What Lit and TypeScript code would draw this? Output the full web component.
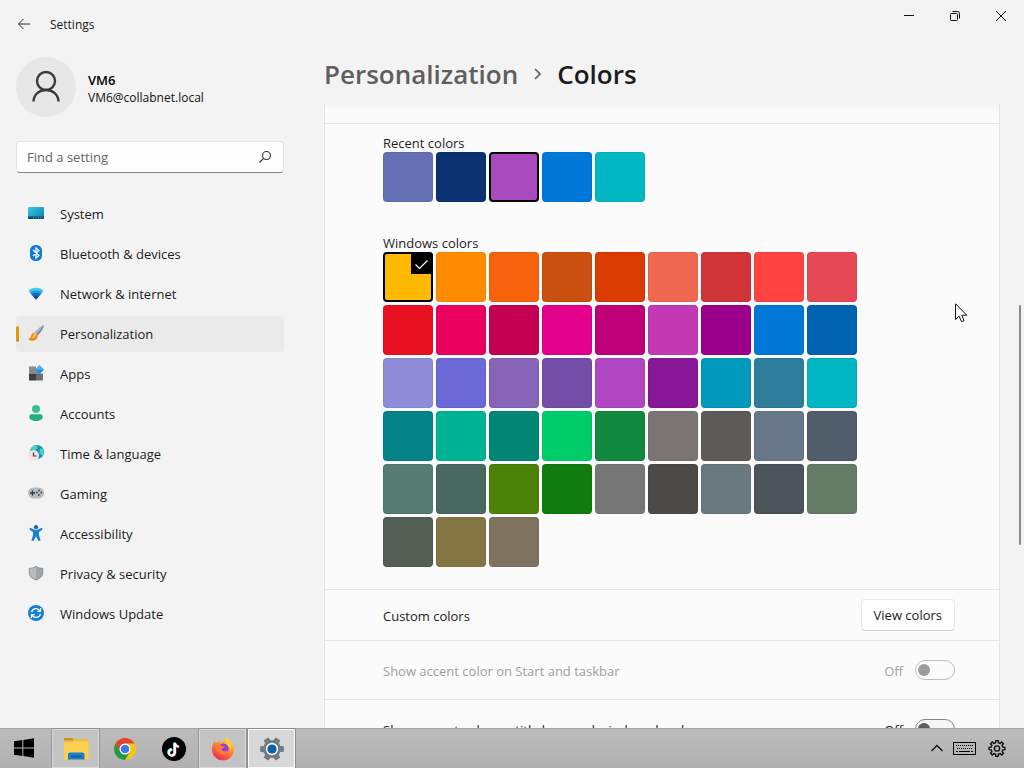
import { LitElement, html, svg, css, nothing } from "lit";
import { customElement, property } from "lit/decorators.js";
import { classMap } from "lit/directives/class-map.js";
import { styleMap } from "lit/directives/style-map.js";

const recentColors = ["#6570b4", "#0b3170", "#a84abe", "#0078d7", "#00b7c3"];

const windowsColors = [
  "#ffb900", "#ff8c00", "#f7630c", "#ca5010", "#da3b01", "#ef6950", "#d13438", "#ff4343", "#e74856",
  "#e81123", "#ea005e", "#c30052", "#e3008c", "#bf0077", "#c239b3", "#9a0089", "#0078d7", "#0063b1",
  "#8e8cd8", "#6b69d6", "#8764b8", "#744da9", "#b146c2", "#881798", "#0099bc", "#2d7d9a", "#00b7c3",
  "#038387", "#00b294", "#018574", "#00cc6a", "#10893e", "#7a7574", "#5d5a58", "#68768a", "#515c6b",
  "#567c73", "#486860", "#498205", "#107c10", "#767676", "#4c4a48", "#69797e", "#4a5459", "#647c64",
  "#525e54", "#847545", "#7e735f",
];

const navIcons = {
  system: svg`
    <defs><linearGradient id="g" x1="0" y1="0" x2="1" y2="1"><stop offset="0" stop-color="#35cbe4"/><stop offset="1" stop-color="#0a7fae"/></linearGradient></defs>
    <rect x="0" y="2" width="16" height="12" rx="1" fill="url(#g)"/>
    <path d="M0 11.5h16V13a1 1 0 0 1-1 1H1a1 1 0 0 1-1-1z" fill="#0b4a63"/>
    <path d="M5 12.8h1M7.5 12.8h1M10 12.8h1M12.5 12.8h1.5" stroke="#4fb9dc" stroke-width="1"/>`,
  bluetooth: svg`
    <rect x="2" y="0" width="12" height="16" rx="5.500" fill="#0f78e0"/>
    <path d="M5 5l6 5.600L8 13.200V2.800l3 2.600L5 11" fill="none" stroke="#fff" stroke-width="1.300"/>`,
  network: svg`
    <path d="M0.300 5.800C3.500 1.700 12.500 1.700 15.700 5.800L8 14.500z" fill="#45c8ef"/>
    <path d="M1.800 7.500C5 4.800 11 4.800 14.200 7.500L8 14.500z" fill="#1d9add"/>
    <path d="M3.500 9.400C6 7.600 10 7.600 12.500 9.400L8 14.500z" fill="#0d6abb"/>
    <path d="M5.500 11.700Q8 10 10.500 11.700L8 14.500z" fill="#0a4c92"/>`,
  personalization: svg`
    <path d="M15.800 .2c-2 .2-7.200 4.600-9.400 7.600l3.200 2.800C12.400 8 16 3 15.800.2z" fill="#7d8b99"/>
    <path d="M15.800.2C13.400 1.200 8.600 5.800 6.600 8.200l1.500 1.200z" fill="#b5c0c9"/>
    <path d="M6.800 7.700c-2.400-.2-3.500 1.500-3.700 3.100C2.900 12.500 1.900 13.500.3 13.700c1 1.700 3.300 2.400 5.400 1.800 2.300-.6 4.100-2.500 4.100-5.100z" fill="#e98b1e"/>
    <path d="M6.800 7.700c-1.800 1-1.400 3.900-3.200 5.500 2.100.2 4.200-.8 4.700-4z" fill="#fbbf52"/>`,
  apps: svg`
    <rect x="1" y="1.500" width="7" height="7" fill="#8b8b8b"/><rect x="1" y="8.500" width="7" height="7" fill="#3f3f3f"/>
    <rect x="8" y="8.500" width="7" height="7" fill="#6d6d6d"/><rect x="8" y="4" width="4" height="5" fill="#8b8b8b"/>
    <path d="M11.500 .2l4.500 4.500-4.500 4.500L7 4.700z" fill="#1f8fe0"/><path d="M11.500.2L16 4.700h-9z" fill="#51b0f0"/>`,
  accounts: svg`
    <circle cx="8" cy="4" r="4" fill="#35c191"/>
    <path d="M3.500 9.300h9A2.200 2.200 0 0 1 14.700 11.500c0 2.800-2.800 4.500-6.700 4.500s-6.700-1.700-6.700-4.500A2.200 2.200 0 0 1 3.500 9.300z" fill="#22b07d"/>`,
  time: svg`
    <circle cx="9" cy="7" r="7" fill="#1596ad"/>
    <path d="M8 .1A7 7 0 0 0 2.500 4.500l4 1L10 3zM12 3l3.600 2c.6 2 .3 4-1 6L11.500 8z" fill="#4cd0cf"/>
    <circle cx="5.500" cy="10.500" r="5.500" fill="#f3e3e5"/>
    <path d="M5.500 7.500v3.500h3" fill="none" stroke="#3b3b4f" stroke-width="1.200"/>`,
  gaming: svg`
    <rect x="0" y="2.500" width="16" height="11" rx="5.500" fill="#b3bbc3"/>
    <path d="M2 8h5M4.500 5.500v5" stroke="#30363d" stroke-width="1.300"/>
    <circle cx="11" cy="5.500" r=".9" fill="#424a52"/><circle cx="13.300" cy="7.500" r=".9" fill="#424a52"/>
    <circle cx="8.800" cy="7.500" r=".9" fill="#424a52"/><circle cx="10.800" cy="10" r=".9" fill="#424a52"/>`,
  accessibility: svg`
    <circle cx="8" cy="2.200" r="2.100" fill="#1464b8"/>
    <path d="M2.300 2.700l4.200 2.100h3l4.200-2.100 .9 1.800-3.600 2.400v3.200l1.500 5.400-2 .5L8 11.500 5.500 16l-2-.5L5 10.100V6.900L1.400 4.500z" fill="#1b7fd8"/>`,
  privacy: svg`
    <path d="M8 1c2 1.300 4.300 1.900 7.200 1.900v4.600c0 3.800-2.700 6.500-7.200 7.900C3.500 14 .8 11.300.8 7.500V2.900C3.700 2.900 6 2.300 8 1z" fill="#8f9295"/>
    <path d="M8 2.100c1.800 1.100 3.900 1.600 6.300 1.700v3.700c0 3.200-2.200 5.600-6.300 6.900z" fill="#a1a4a7"/>
    <path d="M8 2.100C6.200 3.200 4.100 3.700 1.700 3.800v3.700c0 3.200 2.200 5.600 6.300 6.900z" fill="#b9bcbe"/>`,
  update: svg`
    <circle cx="8" cy="8" r="8" fill="#1180d6"/>
    <path d="M3.600 7.200A4.600 4.600 0 0 1 12 5.800M12.400 8.800A4.600 4.600 0 0 1 4 10.200" fill="none" stroke="#fff" stroke-width="1.400"/>
    <path d="M12.600 3v3.300H9.300M3.400 13V9.700h3.300" fill="none" stroke="#fff" stroke-width="1.200"/>`,
};

const navItems: { label: string; icon: keyof typeof navIcons; current?: boolean }[] = [
  { label: "System", icon: "system" },
  { label: "Bluetooth & devices", icon: "bluetooth" },
  { label: "Network & internet", icon: "network" },
  { label: "Personalization", icon: "personalization", current: true },
  { label: "Apps", icon: "apps" },
  { label: "Accounts", icon: "accounts" },
  { label: "Time & language", icon: "time" },
  { label: "Gaming", icon: "gaming" },
  { label: "Accessibility", icon: "accessibility" },
  { label: "Privacy & security", icon: "privacy" },
  { label: "Windows Update", icon: "update" },
];

@customElement("settings-nav")
class SettingsNav extends LitElement {
  static styles = css`
    :host { display: block; padding: 9px 16px 0; }
    .account { display: flex; align-items: center; gap: 12px; }
    .avatar { width: 60px; height: 60px; border-radius: 50%; background: #e7e7e7; }
    .who { padding-top: 3px; }
    .name { font-size: 13px; line-height: 18px; font-weight: 600; color: #000; }
    .mail { font-size: 12px; line-height: 18px; color: #111; }
    .search {
      display: flex; align-items: center; box-sizing: border-box; height: 32px; margin: 24px 0 23px;
      padding: 0 11px 0 10px; background: #fdfdfd; border: 1px solid #e4e4e4; border-bottom-color: #868686; border-radius: 4px;
    }
    .search input {
      flex: 1; min-width: 0; border: 0; padding: 0; outline: 0; background: none;
      font: inherit; font-size: 13px; color: #1b1b1b;
    }
    .search input::placeholder { color: #666; opacity: 1; }
    ul { list-style: none; margin: 0; padding: 0; display: grid; gap: 4px; }
    .item {
      display: flex; align-items: center; height: 36px; gap: 16px; border-radius: 4px;
      color: #1b1b1b; text-decoration: none; font-size: 13px;
    }
    .marker { width: 3px; height: 16px; border-radius: 2px; margin-right: -7px; }
    .current { background: #eaeaea; }
    .current .marker { background: #dc9a0a; }
    .icon { overflow: visible; margin-bottom: 2px; }
  `;
  render() {
    return html`
      <div class="account">
        <svg class="avatar" viewBox="0 0 60 60" fill="none" stroke="#3b3b3b" stroke-width="2.400">
          <circle cx="30" cy="24" r="9"/><path d="M17.500 44.500c.3-7 5.500-11.500 12.500-11.500s12.200 4.500 12.500 11.500"/>
        </svg>
        <div class="who"><div class="name">VM6</div><div class="mail">VM6@collabnet.local</div></div>
      </div>
      <label class="search">
        <input type="text" placeholder="Find a setting" aria-label="Find a setting"/>
        <svg width="14" height="14" viewBox="0 0 14 14" fill="none" stroke="#333" stroke-width="1.100">
          <circle cx="8.500" cy="5.500" r="4"/><path d="M5.600 8.400L1.500 12.500"/>
        </svg>
      </label>
      <nav><ul>
        ${navItems.map((i) => html`<li>
          <a href="#${i.icon}" class=${classMap({ item: true, current: !!i.current })} aria-current=${i.current ? "page" : nothing}>
            <span class="marker"></span>
            <svg class="icon" width="16" height="16" viewBox="0 0 16 16">${navIcons[i.icon]}</svg>
            <span>${i.label}</span>
          </a></li>`)}
      </ul></nav>`;
  }
}

@customElement("color-grid")
class ColorGrid extends LitElement {
  @property() heading = "";
  @property({ attribute: false }) colors: string[] = [];
  @property({ type: Number }) selected = -1;
  @property({ type: Boolean }) ticked = false;
  static styles = css`
    :host { display: block; }
    fieldset { border: 0; margin: 0; padding: 0; min-width: 0; }
    legend { padding: 0; font-size: 13px; line-height: 18px; color: #1b1b1b; }
    .grid { display: grid; grid-template-columns: repeat(9, 50px); gap: 3px; }
    .cell { position: relative; height: 50px; }
    input {
      appearance: none; display: block; width: 50px; height: 50px; margin: 0;
      border-radius: 4px; box-sizing: border-box; border: 1px solid rgba(0, 0, 0, 0.05);
    }
    input:checked { border: 2px solid #000; }
    .tick { position: absolute; top: 0; right: 0; border-top-right-radius: 4px; background: #000; }
  `;
  render() {
    return html`<fieldset>
      <legend>${this.heading}</legend>
      <div class="grid">
        ${this.colors.map((c, i) => html`<label class="cell">
          <input type="radio" name="color" aria-label=${c} .checked=${i === this.selected} style=${styleMap({ backgroundColor: c })}/>
          ${this.ticked && i === this.selected
            ? html`<svg class="tick" width="22" height="22" viewBox="0 0 22 22"><path d="M4.500 12.500l4 4 8-8" fill="none" stroke="#fff" stroke-width="1.200"/></svg>`
            : nothing}
        </label>`)}
      </div>
    </fieldset>`;
  }
}

@customElement("colors-page")
class ColorsPage extends LitElement {
  static styles = css`
    :host { display: flex; flex-direction: column; min-height: 0; min-width: 0; padding-left: 24px; }
    h1 {
      display: flex; align-items: center; gap: 14px; margin: 0; height: 56px; padding-bottom: 4px; box-sizing: border-box;
      font-size: 26px; line-height: 36px; font-weight: 600; color: #1b1b1b;
    }
    h1 a { color: #5e5e5e; text-decoration: none; }
    .view { flex: 1; min-height: 0; display: grid; grid-template-columns: 1fr 24px; grid-template-rows: minmax(0, 1fr); }
    .scroller { overflow: hidden; }
    .card { background: #fbfbfb; border: solid #e5e5e5; border-width: 0 1px; }
    .above { height: 19px; background: linear-gradient(#f3f3f3, #fbfbfb 6px); }
    .palette, .row { border-top: 1px solid #e5e5e5; padding: 0 44px 0 58px; }
    .palette { display: grid; gap: 32px; padding-top: 10px; padding-bottom: 22px; }
    .row { display: flex; align-items: center; height: 58px; font-size: 13px; color: #1b1b1b; }
    .row.short { height: 50px; }
    .row .text { flex: 1; padding-top: 2px; }
    .row.off { color: #a0a0a0; }
    .state { margin-right: 12px; padding-top: 2px; }
    .view-colors {
      height: 32px; padding: 0 12px; font: inherit; color: #1b1b1b; background: #fefefe;
      border: 1px solid #e8e8e8; border-bottom-color: #cfcfcf; border-radius: 4px;
    }
    .switch {
      appearance: none; display: flex; align-items: center; box-sizing: border-box; width: 40px; height: 20px; margin: 0;
      border: 1px solid #868686; border-radius: 10px; padding: 0 2px; background: #f6f6f6;
    }
    .switch::before { content: ""; width: 12px; height: 12px; border-radius: 50%; background: #5c5c5c; }
    .switch:disabled { border-color: #bdbdbd; background: #fbfbfb; }
    .switch:disabled::before { background: #9d9d9d; }
    .rail { display: flex; flex-direction: column; align-items: flex-end; padding-right: 3px; }
    .before { flex: 201; }
    .thumb { flex: 240; width: 2px; border-radius: 1px; background: #8a8a8a; }
    .after { flex: 183; }
  `;
  render() {
    return html`
      <h1>
        <a href="#personalization">Personalization</a>
        <svg width="11" height="14" viewBox="0 0 11 14" fill="none" stroke="#5e5e5e" stroke-width="1.700"><path d="M3 2l5 5-5 5"/></svg>
        <span>Colors</span>
      </h1>
      <div class="view">
        <div class="scroller"><div class="card">
          <div class="above"></div>
          <div class="palette">
            <color-grid heading="Recent colors" .colors=${recentColors} selected="2"></color-grid>
            <color-grid heading="Windows colors" .colors=${windowsColors} selected="0" ticked></color-grid>
          </div>
          <div class="row short">
            <span class="text">Custom colors</span>
            <button class="view-colors">View colors</button>
          </div>
          <div class="row off">
            <label class="text" for="taskbar">Show accent color on Start and taskbar</label>
            <span class="state">Off</span>
            <input class="switch" id="taskbar" type="checkbox" role="switch" disabled/>
          </div>
          <div class="row">
            <label class="text" for="borders">Show accent color on title bars and windows borders</label>
            <span class="state">Off</span>
            <input class="switch" id="borders" type="checkbox" role="switch"/>
          </div>
        </div></div>
        <div class="rail"><span class="before"></span><span class="thumb"></span><span class="after"></span></div>
      </div>`;
  }
}

const gearPath = (cx: number, cy: number, teeth: number, outer: number, inner: number) => {
  const step = (Math.PI * 2) / teeth;
  const at = (r: number, a: number) => `${(cx + r * Math.sin(a)).toFixed(2)} ${(cy - r * Math.cos(a)).toFixed(2)}`;
  return Array.from({ length: teeth }, (_, i) => {
    const a = i * step;
    return `${i ? "L" : "M"}${at(inner, a - step * 0.3)}L${at(outer, a - step * 0.19)}L${at(outer, a + step * 0.19)}L${at(inner, a + step * 0.3)}`;
  }).join("") + "Z";
};

const taskIcons = {
  start: svg`<path d="M2 4.200l8.300-1.200v7.500H2zM11.300 2.900L22 1.300v9.200H11.300zM2 11.500h8.300V19L2 17.800zM11.300 11.500H22v9.200l-10.700-1.600z" fill="#000"/>`,
  explorer: svg`
    <path d="M0 1h8.500l1.500 2.500H0z" fill="#d9920e"/><path d="M0 4.500h7.500L9.500 2.200H24.500V22.500H0z" fill="#f3b92c"/>
    <path d="M0 5.500h8l1.500-1.500h15v18.500H0z" fill="#fcd050"/>
    <path d="M4 22.500v-5a2 2 0 0 1 2-2h12.500a2 2 0 0 1 2 2v5z" fill="#1a7fcc"/><path d="M7 19.500h10.500" stroke="#0d5ba0" stroke-width="1.600"/>`,
  chrome: svg`
    <circle cx="12" cy="12" r="11" fill="#fbc116"/>
    <path d="M2.500 6.500A11 11 0 0 1 21.530 6.500H12L7.200 14.800z" fill="#dd4434"/>
    <path d="M2.500 6.500A11 11 0 0 0 12 23l4.800-8.300-9.600.1z" fill="#20974c"/>
    <circle cx="12" cy="12" r="5.500" fill="#fff"/><circle cx="12" cy="12" r="4.300" fill="#3a7ae8"/>`,
  tiktok: svg`
    <circle cx="12" cy="12" r="12" fill="#000"/>
    <g fill="none" stroke-width="2.200">
      <path d="M12.200 5.500v9.700a3 3 0 1 1-2.700-3M12.200 5.500c.3 2.200 1.800 3.600 4 3.800" stroke="#25f4ee"/>
      <path d="M13.400 6.300V16a3 3 0 1 1-2.700-3M13.400 6.300c.3 2.200 1.800 3.600 4 3.800" stroke="#fe2c55"/>
      <path d="M12.800 5.900v9.700a3 3 0 1 1-2.700-3M12.800 5.900c.3 2.200 1.800 3.600 4 3.800" stroke="#fff"/>
    </g>`,
  firefox: svg`
    <defs><linearGradient id="f" x1=".8" y1="0" x2=".25" y2="1"><stop offset="0" stop-color="#ffe24a"/><stop offset=".45" stop-color="#ff8a2a"/><stop offset="1" stop-color="#f0245c"/></linearGradient></defs>
    <path d="M15 .5c3 2.200 4 4 4.300 5.500.9-.2 1-.9 1-1.500 2 2.500 2.700 5 2.700 8a11 11 0 0 1-22 0C1 8.600 2.200 6 4 3.500c0 1.300.2 1.900.8 2.500C6.500 4.700 8 4.400 9.500 4.700 11.500 5 13.500 4.500 15 .5z" fill="url(#f)"/>
    <circle cx="12.300" cy="11.800" r="5.200" fill="#8a3fe0"/>
    <path d="M5 9.500c2-2.500 4.600-2.200 6-.8 1.200.2 2.500.6 2.800 1.400-.6 1.200-3.200 1-3.200 2.300 1 2.300 4.300 2.600 5.800.8 0 3-2.200 4.600-4.700 4.400C7.500 17.200 5 14 5 9.500z" fill="#ff7a32"/>
    <path d="M15 .5c3.600 2.600 6.500 7 4.500 13C19.600 9.500 14 7.500 15 .5z" fill="#ffcf3d"/>`,
  settings: svg`
    <path d=${gearPath(12, 12, 6, 11.5, 8.5)} transform="rotate(30 12 12)" fill="#737b81" stroke="#737b81" stroke-width="1"/>
    <circle cx="12" cy="12" r="6.200" fill="#f1f4f6"/><circle cx="12" cy="12" r="4.600" fill="#0b63ae"/>`,
};

const tasks: { name: string; icon: keyof typeof taskIcons; open?: boolean; active?: boolean }[] = [
  { name: "Start", icon: "start" },
  { name: "File Explorer", icon: "explorer", open: true },
  { name: "Chrome", icon: "chrome" },
  { name: "TikTok", icon: "tiktok" },
  { name: "Firefox", icon: "firefox", open: true },
  { name: "Settings", icon: "settings", active: true },
];

@customElement("task-bar")
class TaskBar extends LitElement {
  static styles = css`
    :host {
      display: flex; justify-content: space-between; box-sizing: border-box; height: 40px;
      background: linear-gradient(#bcbcbc, #b1b1b1); border-top: 1px solid #a2a2a2;
    }
    .apps { display: flex; gap: 2px; }
    button { border: 0; background: none; padding: 0; display: grid; place-items: center; }
    .app { width: 47px; height: 39px; box-sizing: border-box; }
    .app:first-child { width: 48px; margin-right: 2px; }
    .app svg { overflow: visible; }
    .open { background: #c3c3c3; border: 1px solid #d8d8d8; outline: 1px solid #979797; }
    .active { background: #d8d8d8; border: 1px solid #fbfbfb; outline: 1px solid #8c8c8c; }
    .tray { display: flex; align-items: center; gap: 8px; padding-right: 18px; }
  `;
  render() {
    return html`
      <div class="apps">
        ${tasks.map((t) => html`<button class=${classMap({ app: true, open: !!t.open, active: !!t.active })} aria-label=${t.name}>
          <svg width="24" height="24" viewBox="0 0 24 24">${taskIcons[t.icon]}</svg></button>`)}
      </div>
      <div class="tray">
        <button aria-label="Show hidden icons"><svg width="14" height="16" viewBox="0 0 14 16" fill="none" stroke="#111" stroke-width="1.300"><path d="M1.500 10L7 4.500l5.500 5.500"/></svg></button>
        <button aria-label="Touch keyboard"><svg width="24" height="14" viewBox="0 0 24 14" fill="none" stroke="#000">
          <rect x="1.500" y=".5" width="22" height="12"/><path d="M4 3.500h17M5 6.500h15" stroke-dasharray="1 1"/><path d="M4 9.500h2M7 9.500h11M19 9.500h2"/></svg></button>
        <button aria-label="Quick settings"><svg width="22" height="18" viewBox="0 0 22 18" fill="none" stroke="#111" stroke-width="1.400">
          <path d=${gearPath(13, 8.5, 8, 8, 6)}/><circle cx="13" cy="8.500" r="2.600"/></svg></button>
      </div>`;
  }
}

@customElement("app-root")
class AppRoot extends LitElement {
  static styles = css`
    :host {
      display: grid; grid-template-rows: 48px minmax(0, 1fr) auto; height: 100vh; position: relative; overflow: hidden;
      background: #f3f3f3; font-family: "Open Sans", "Noto Sans", sans-serif;
    }
    .title { display: flex; align-items: center; color: #1b1b1b; font-size: 12px; }
    .title button { border: 0; padding: 0; background: none; display: grid; place-items: center; }
    .back { width: 48px; height: 48px; }
    .name { flex: 1; padding-left: 2px; }
    .caption { align-self: flex-start; display: flex; }
    .caption button { width: 46px; height: 32px; }
    .body { display: grid; grid-template-columns: 300px minmax(0, 1fr); min-height: 0; }
    .cursor { position: absolute; left: 93.3%; top: 303px; }
  `;
  render() {
    return html`
      <header class="title">
        <button class="back" aria-label="Back"><svg width="14" height="14" viewBox="0 0 14 14" fill="none" stroke="#333"><path d="M13 7H1.500M6.500 2l-5 5 5 5"/></svg></button>
        <span class="name">Settings</span>
        <div class="caption">
          <button aria-label="Minimize"><svg width="12" height="12" viewBox="0 0 12 12" stroke="#111"><path d="M1 5.500h10"/></svg></button>
          <button aria-label="Restore"><svg width="12" height="12" viewBox="0 0 12 12" fill="none" stroke="#111"><rect x="1.500" y="3.500" width="7" height="7" rx="1"/><path d="M3.500 1.500H8.500a2 2 0 0 1 2 2V8.500"/></svg></button>
          <button aria-label="Close"><svg width="12" height="12" viewBox="0 0 12 12" stroke="#111"><path d="M1 1l10 10M11 1L1 11"/></svg></button>
        </div>
      </header>
      <div class="body">
        <settings-nav></settings-nav>
        <colors-page></colors-page>
      </div>
      <task-bar></task-bar>
      <svg class="cursor" width="13" height="20" viewBox="0 0 13 20"><path d="M.5.8v15.700l3.600-3.400 2.400 5.600 2.500-1.100-2.300-5.400h5.100z" fill="#fff" stroke="#111"/></svg>`;
  }
}
